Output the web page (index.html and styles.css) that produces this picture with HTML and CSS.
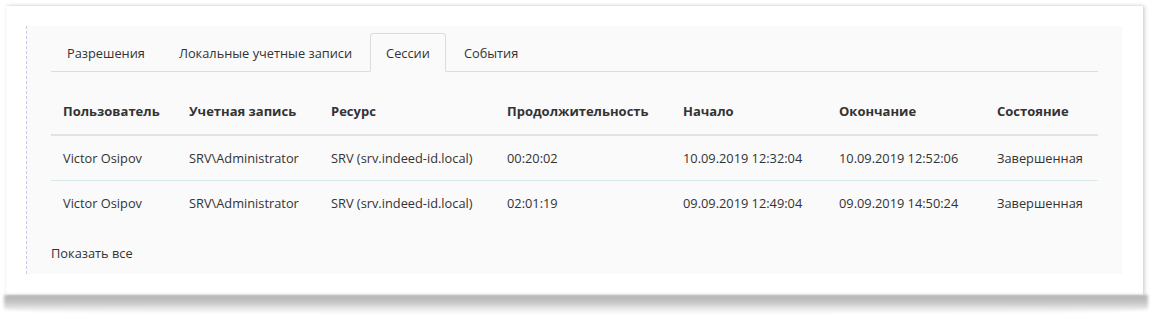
FILE: index.html
```html
<!DOCTYPE html>
<html lang="ru">
<head>
<meta charset="utf-8">
<title>Сессии</title>
<link rel="stylesheet" href="styles.css">
</head>
<body>
<div class="card">
  <div class="panel">
    <ul class="tabs">
      <li class="tab">Разрешения</li>
      <li class="tab">Локальные учетные записи</li>
      <li class="tab active">Сессии</li>
      <li class="tab">События</li>
    </ul>
    <table class="grid">
      <colgroup>
        <col class="c1"><col class="c2"><col class="c3"><col class="c4"><col class="c5"><col class="c6"><col>
      </colgroup>
      <thead>
        <tr>
          <th>Пользователь</th>
          <th>Учетная запись</th>
          <th>Ресурс</th>
          <th>Продолжительность</th>
          <th>Начало</th>
          <th>Окончание</th>
          <th>Состояние</th>
        </tr>
      </thead>
      <tbody>
        <tr>
          <td>Victor Osipov</td>
          <td>SRV\Administrator</td>
          <td>SRV (srv.indeed-id.local)</td>
          <td>00:20:02</td>
          <td>10.09.2019 12:32:04</td>
          <td>10.09.2019 12:52:06</td>
          <td>Завершенная</td>
        </tr>
        <tr>
          <td>Victor Osipov</td>
          <td>SRV\Administrator</td>
          <td>SRV (srv.indeed-id.local)</td>
          <td>02:01:19</td>
          <td>09.09.2019 12:49:04</td>
          <td>09.09.2019 14:50:24</td>
          <td>Завершенная</td>
        </tr>
      </tbody>
    </table>
    <a class="show-all">Показать все</a>
  </div>
</div>
</body>
</html>
```

FILE: styles.css
```css
html, body {
  margin: 0;
  padding: 0;
  background: #ffffff;
}
body {
  font-family: "Open Sans", "Noto Sans", "DejaVu Sans", sans-serif;
  font-size: 12.8px;
  color: #333333;
  padding: 6px 0 30px 6px;
}
.card {
  position: relative;
  z-index: 0;
  width: 1137px;
  height: 289px;
  box-sizing: border-box;
  background: #ffffff;
  padding: 20px 21px 21px 20px;
  box-shadow: 2px 0 4px rgba(0,0,0,0.16), 0 -1px 3px rgba(0,0,0,0.06);
}
.card::after {
  content: "";
  position: absolute;
  left: -2px;
  right: -5px;
  top: 100%;
  height: 19px;
  background: linear-gradient(to bottom, rgba(0,0,0,0.30), rgba(0,0,0,0.22) 40%, rgba(0,0,0,0.08) 75%, rgba(0,0,0,0.0));
  border-radius: 0 0 40% 40% / 0 0 5px 5px;
  filter: blur(1.5px);
  z-index: -1;
}
.panel {
  height: 100%;
  box-sizing: border-box;
  background: #fafafa;
  border-left: 1px dashed #c9cbe6;
  padding: 7px 24px 0 24px;
}
.tabs {
  list-style: none;
  margin: 0;
  padding: 0;
  display: flex;
  border-bottom: 1px solid #dddddd;
}
.tab {
  margin: 0 2px -1px 0;
  padding: 0 15px;
  height: 37px;
  line-height: 38px;
  border: 1px solid transparent;
  border-radius: 4px 4px 0 0;
  color: #333;
  white-space: nowrap;
}
.tab.active {
  border-color: #dddddd;
  border-bottom-color: #fafafa;
  background: #fafafa;
}
.grid {
  margin-top: 16px;
  width: 100%;
  table-layout: fixed;
  border-collapse: collapse;
}
.c1 { width: 126px; }
.c2 { width: 142px; }
.c3 { width: 176px; }
.c4 { width: 176px; }
.c5 { width: 156px; }
.c6 { width: 158px; }
.grid th, .grid td {
  text-align: left;
  padding: 13px 12px;
  line-height: 18px;
  white-space: nowrap;
}
.grid th {
  font-weight: 700;
  font-size: 13px;
  border-bottom: 2px solid #dfe3e8;
  padding-top: 14px;
  padding-bottom: 14px;
}
.grid tbody tr:first-child td {
  border-bottom: 1px solid #d9e9ee;
}
.show-all {
  display: block;
  margin-top: 19px;
  line-height: 18px;
  color: #333;
}
```
